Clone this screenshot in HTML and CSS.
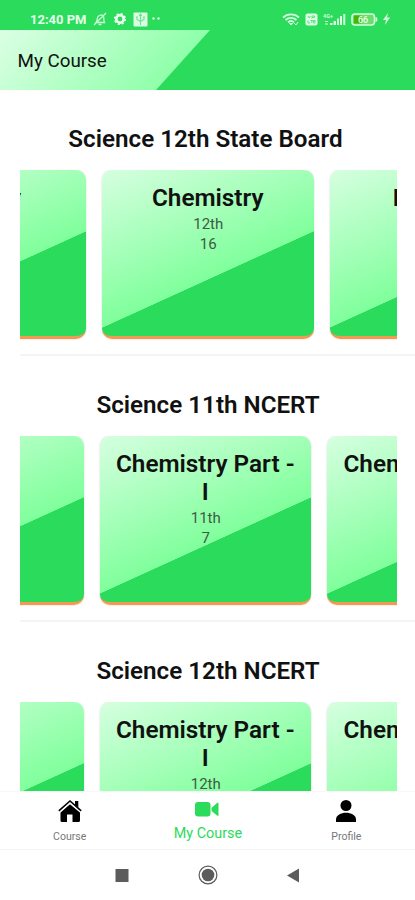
FILE: index.html
```
<!DOCTYPE html>
<html lang="en">

<head>
    <meta charset="utf-8">
    <title>My Course</title>
    <link rel="stylesheet" href="styles.css">
</head>

<body>
    <div class="status-bar">
        <div class="status-left">
            <span class="time">12:40 PM</span>
            <svg width="14" height="14" viewBox="0 0 14 14" fill="none" stroke="#c9fbd6" stroke-width="1.3">
                <path d="M3 10.500c1.500-1.500.8-4 2-5.800C6.500 2.500 9.500 2.500 10.500 4.500c.8 2-.2 4 1 6H3zM1 13L13 1M5.500 12.500h3" />
            </svg>
            <svg width="14" height="14" viewBox="0 0 14 14" fill="none" stroke="#f0fff3">
                <circle cx="7" cy="7" r="3.700" stroke-width="2.600" />
                <circle cx="7" cy="7" r="5.300" stroke-width="1.500" stroke-dasharray="2.100 2.060" />
            </svg>
            <svg width="15" height="15" viewBox="0 0 15 15">
                <rect x=".5" y=".5" width="14" height="14" rx="1" fill="#dcfde4" />
                <path d="M7.500 13V3M4 5v2.500l3.500 2M11 5v2.500l-3.500 2M6 4l1.500-2L9 4M3 5h2M10 5h2" fill="none" stroke="#6be58b" stroke-width="1.100" />
            </svg>
            <svg width="10" height="14" viewBox="0 0 10 14" fill="#d5fcdf">
                <circle cx="-.5" cy="6.500" r="1.200" />
                <circle cx="4.500" cy="6.500" r="1.200" />
            </svg>
        </div>
        <div class="status-right">
            <svg width="18" height="14" viewBox="0 0 18 14" fill="none" stroke="#d5fcdf" stroke-width="1.900">
                <path d="M1 5.500c4.500-4.200 11.500-4.200 16 0M3.500 8c3.200-2.900 7.800-2.900 11 0M6 10.300c1.800-1.500 4.200-1.500 6 0" />
                <path d="M7.500 11.500L9 13l1.500-1.500zM12 11l2 2 2-3" stroke-width="1" />
            </svg>
            <svg width="13" height="13" viewBox="0 0 13 13">
                <rect x=".5" y=".5" width="12" height="12" rx="2" fill="#dcfde4" />
                <path d="M3 3l1.200 2L5.500 3M7 5.500V3h2.500v1.500H7M3 7.500V10h2M5.500 7.500H8M6.800 7.500V10M10.500 7.500h-2V10h2M8.500 8.700h2" fill="none" stroke="#45d96d" stroke-width=".8" />
            </svg>
            <svg width="23" height="14" viewBox="0 0 23 14" fill="#d5fcdf">
                <text x="0" y="5.500" class="network">4G+</text>
                <path d="M2 9h3v1H2zM2 11.500h3v1H2zM7 11h2.500v2H7zM10.500 9H13v4h-2.500zM14 6.500h2V13h-2zM17 4h2v9h-2zM20.300 2h2v11h-2z" />
            </svg>
            <svg width="27" height="13" viewBox="0 0 27 13">
                <rect x="1" y="1" width="22.500" height="11" rx="3" fill="#6bdc6d" stroke="#d5fcdf" stroke-width="1.600" />
                <path d="M3 2.500h7v8H3z" fill="#42b800" />
                <path d="M24.500 4c2.500 0 2.500 5 0 5z" fill="#d5fcdf" />
                <text x="7" y="10" class="battery">66</text>
            </svg>
            <svg width="7" height="12" viewBox="0 0 7 12" fill="#d5fcdf">
                <path d="M5 0L0 7h3L2 12l5-7.500H4z" />
            </svg>
        </div>
    </div>

    <header class="header">
        <h1>My Course</h1>
    </header>

    <main class="content">
        <section class="section state-board">
            <h2>Science 12th State Board</h2>
            <div class="slider">
                <div class="track">
                    <div class="card">
                        <h3>Biology</h3>
                    </div>
                    <div class="card">
                        <h3>Chemistry</h3>
                        <p>12th</p>
                        <p>16</p>
                    </div>
                    <div class="card">
                        <h3>Physics</h3>
                    </div>
                </div>
            </div>
        </section>

        <section class="section">
            <h2>Science 11th NCERT</h2>
            <div class="slider">
                <div class="track">
                    <div class="card"></div>
                    <div class="card">
                        <h3>Chemistry Part - I</h3>
                        <p>11th</p>
                        <p>7</p>
                    </div>
                    <div class="card">
                        <h3>Chemistry Part - II</h3>
                    </div>
                </div>
            </div>
        </section>

        <section class="section">
            <h2>Science 12th NCERT</h2>
            <div class="slider">
                <div class="track">
                    <div class="card"></div>
                    <div class="card">
                        <h3>Chemistry Part - I</h3>
                        <p>12th</p>
                    </div>
                    <div class="card">
                        <h3>Chemistry Part - II</h3>
                    </div>
                </div>
            </div>
        </section>
    </main>

    <nav class="tabs">
        <a class="tab">
            <svg width="26" height="26" viewBox="0 0 26 26">
                <path d="M13 6.200L3.500 14.500v8Q3.500 24 5 24h5v-7.500h5.500V24h6q1.500 0 1.500-1.500v-8z" />
                <path d="M18 3h3.300v7L18 7z" />
                <path d="M1.800 13.800L13 4l11.200 9.800" fill="none" stroke="#fff" stroke-width="2.400" />
                <path d="M1.800 12.900L13 3l11.200 9.900" fill="none" stroke="#000" stroke-width="1.600" />
            </svg>
            <span>Course</span>
        </a>
        <a class="tab active">
            <svg width="26" height="18" viewBox="0 0 26 18" fill="#2bdb5b">
                <rect x="0" y="2" width="15.500" height="14.500" rx="3" />
                <path d="M16.500 8L22 3q1.500-1 1.500.5v11.500q0 1.500-1.500.5l-5.500-4.500z" />
            </svg>
            <span>My Course</span>
        </a>
        <a class="tab">
            <svg width="26" height="26" viewBox="0 0 26 26">
                <circle cx="13" cy="7.500" r="5.500" />
                <path d="M3 23.500v-2c0-9 20-9 20 0v2q0 .5-.5.5h-19q-.5 0-.5-.5z" />
            </svg>
            <span>Profile</span>
        </a>
    </nav>

    <div class="system-nav">
        <svg width="20" height="20" viewBox="0 0 20 20" fill="#5c5c5c">
            <rect x="3.500" y="4" width="13" height="13" />
        </svg>
        <svg width="20" height="20" viewBox="0 0 20 20" fill="#5c5c5c">
            <circle cx="10" cy="10" r="6.300" />
            <circle cx="10" cy="10" r="8.900" fill="none" stroke="#5c5c5c" stroke-width="1.200" />
        </svg>
        <svg width="20" height="20" viewBox="0 0 20 20" fill="#5c5c5c">
            <path d="M3 10.500L15 3.500v14z" />
        </svg>
    </div>
</body>

</html>
```
FILE: styles.css
```
* {
    box-sizing: border-box;
}

body {
    margin: 0;
    height: 900px;
    display: flex;
    flex-direction: column;
    overflow: hidden;
    background-color: #fff;
    font-family: Roboto, sans-serif;
    color: #111;
}

h1,
h2,
h3,
p {
    margin: 0;
}

svg {
    display: block;
    overflow: visible;
}

.status-bar {
    height: 30px;
    flex: none;
    display: flex;
    justify-content: space-between;
    padding: 8px 25px 0 30px;
    background-color: #2bdb5b;
}

.status-left,
.status-right {
    display: flex;
    align-items: center;
    height: 22px;
}

.status-left {
    gap: 6px;
}

.status-right {
    gap: 5px;
}

.time {
    width: 57px;
    font-size: 13px;
    font-weight: 700;
    white-space: nowrap;
    color: #e4ffec;
}

.network {
    font-size: 5.5px;
    font-weight: 700;
}

.battery {
    font-size: 9px;
    font-weight: 500;
    fill: #f0ffe8;
}

.header {
    height: 60px;
    flex: none;
    padding: 19px 17.5px;
    background-color: #2bdb5b;
    position: relative;
    z-index: 0;
}

.header::before {
    content: "";
    position: absolute;
    inset: 0;
    z-index: -1;
    background: linear-gradient(131deg, #dbffe4 0, #80ff9e 190px);
    clip-path: polygon(0 0, 210px 0, 156px 100%, 0 100%);
}

.header h1 {
    font-size: 18.8px;
    line-height: 24px;
    font-weight: 400;
}

.content {
    flex: 1;
    min-height: 0;
    overflow: hidden;
    padding-top: 34px;
}

.section {
    height: 266px;
}

.section h2 {
    height: 46px;
    font-size: 24.2px;
    line-height: 30px;
    font-weight: 600;
    text-align: center;
    padding-left: 1px;
}

.state-board h2 {
    padding-right: 5px;
}

.slider {
    width: 376.5px;
    height: 184px;
    margin-left: 20px;
    overflow: hidden;
}

.section + .section {
    position: relative;
}

.section + .section::before {
    content: "";
    position: absolute;
    top: -36px;
    left: 20px;
    right: 0;
    height: 2px;
    background-color: #f4f4f4;
}

.track {
    display: flex;
    gap: 16px;
    width: max-content;
    margin-left: -148px;
}

.state-board .track {
    margin-left: -145.5px;
}

.card {
    width: 211.5px;
    height: 169px;
    padding: 14px 14px 0;
    border-bottom: 3px solid #f4994d;
    border-radius: 10px;
    background: linear-gradient(155.5deg, #d6ffe0 0%, #80ff9c 60%, #2bdb5b 60.2%);
    box-shadow: 0 0 2px rgba(0, 0, 0, 0.2);
    text-align: center;
}

.card h3 {
    font-size: 24.3px;
    line-height: 28px;
    font-weight: 600;
}

.card p {
    font-size: 15px;
    line-height: 20px;
    padding-left: 1px;
    color: #3d5b45;
}

.card p:first-of-type {
    margin-top: 2px;
}

.tabs {
    height: 59px;
    flex: none;
    display: grid;
    grid-template-columns: repeat(3, 1fr);
    border-top: 1px solid #f7f7f7;
    border-bottom: 1px solid #f4f4f4;
}

.tab {
    display: flex;
    flex-direction: column;
    align-items: center;
    padding-top: 6px;
    padding-left: 1px;
    font-size: 10.5px;
    line-height: 12px;
    color: #777;
}

.tab span {
    margin-top: 7px;
}

.tab.active {
    padding-top: 8px;
    font-size: 14.4px;
    line-height: 18px;
    color: #2bdb5b;
}

.system-nav {
    height: 50px;
    flex: none;
    display: flex;
    justify-content: center;
    align-items: center;
    gap: 66px;
}
```
